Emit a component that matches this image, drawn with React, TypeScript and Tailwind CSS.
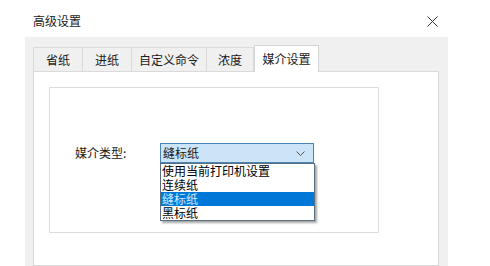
import React from "react";

const tabs = [
  { label: "省纸", w: "w-[50px]" },
  { label: "进纸", w: "w-[49px]" },
  { label: "自定义命令", w: "w-[75px]" },
  { label: "浓度", w: "w-[47px]" },
];

const options = ["使用当前打印机设置", "连续纸", "缝标纸", "黑标纸"];

export default function App() {
  return (
    <div
      className="relative h-[266px] w-[490px] overflow-hidden bg-white text-[#1a1a1a]"
      style={{ fontFamily: '"Noto Sans CJK SC", "Noto Sans", sans-serif' }}
    >
      {/* Title bar */}
      <div className="flex h-[37px] items-start justify-between pl-[33px] pr-[52px] pt-[12px]">
        <span className="text-[12px] leading-[18px]">高级设置</span>
        <svg width="11" height="11" viewBox="0 0 11 11" className="mt-[4px]">
          <path d="M0.5 0.5 L10.5 10.5 M10.5 0.5 L0.5 10.5" stroke="#333" strokeWidth="1" />
        </svg>
      </div>

      {/* Gray dialog body */}
      <div className="ml-[25px] h-[229px] w-[423px] bg-[#f0f0f0] pl-[8px] pr-[9px] pt-[8px]">
        {/* Tabs */}
        <div className="flex h-[26px] items-end">
          {tabs.map((t) => (
            <div
              key={t.label}
              className={`${t.w} flex h-[24px] items-center justify-center border-r border-t border-[#dadada] text-[12px] first:border-l`}
            >
              {t.label}
            </div>
          ))}
          <div className="relative z-10 -mb-px flex h-[27px] w-[65px] items-center justify-center border-x border-t border-[#d4d4d4] bg-white text-[12px]">
            媒介设置
          </div>
        </div>

        {/* Tab page */}
        <div className="h-[195px] border border-[#dadada] bg-white pl-[15px] pt-[15px]">
          <div className="h-[146px] w-[330px] border border-[#dcdcdc] pt-[55px]">
            <div className="flex items-center">
              <span className="ml-[25px] w-[85px] text-[12px]">媒介类型:</span>
              <div className="relative h-[20px] w-[154px]">
                <div className="flex h-[20px] items-center justify-between border border-[#4a84b5] bg-[#cce4f7] pl-[2px] pr-[8px] text-[12px]">
                  <span>缝标纸</span>
                  <svg width="9" height="5" viewBox="0 0 9 5">
                    <path d="M0.5 0.5 L4.5 4.5 L8.5 0.5" fill="none" stroke="#555" strokeWidth="1" />
                  </svg>
                </div>
                <div className="absolute left-0 top-full z-20 w-[155px] border border-[#5b6e80] bg-white shadow-[2px_2px_2px_rgba(0,0,0,0.35)]">
                  {options.map((o) => (
                    <div
                      key={o}
                      className={`h-[14px] pl-[1px] text-[12px] leading-[14px] ${
                        o === "缝标纸" ? "bg-[#0078d7] text-[#cfe8ff]" : "text-black"
                      }`}
                    >
                      {o}
                    </div>
                  ))}
                </div>
              </div>
            </div>
          </div>
        </div>
      </div>
    </div>
  );
}
